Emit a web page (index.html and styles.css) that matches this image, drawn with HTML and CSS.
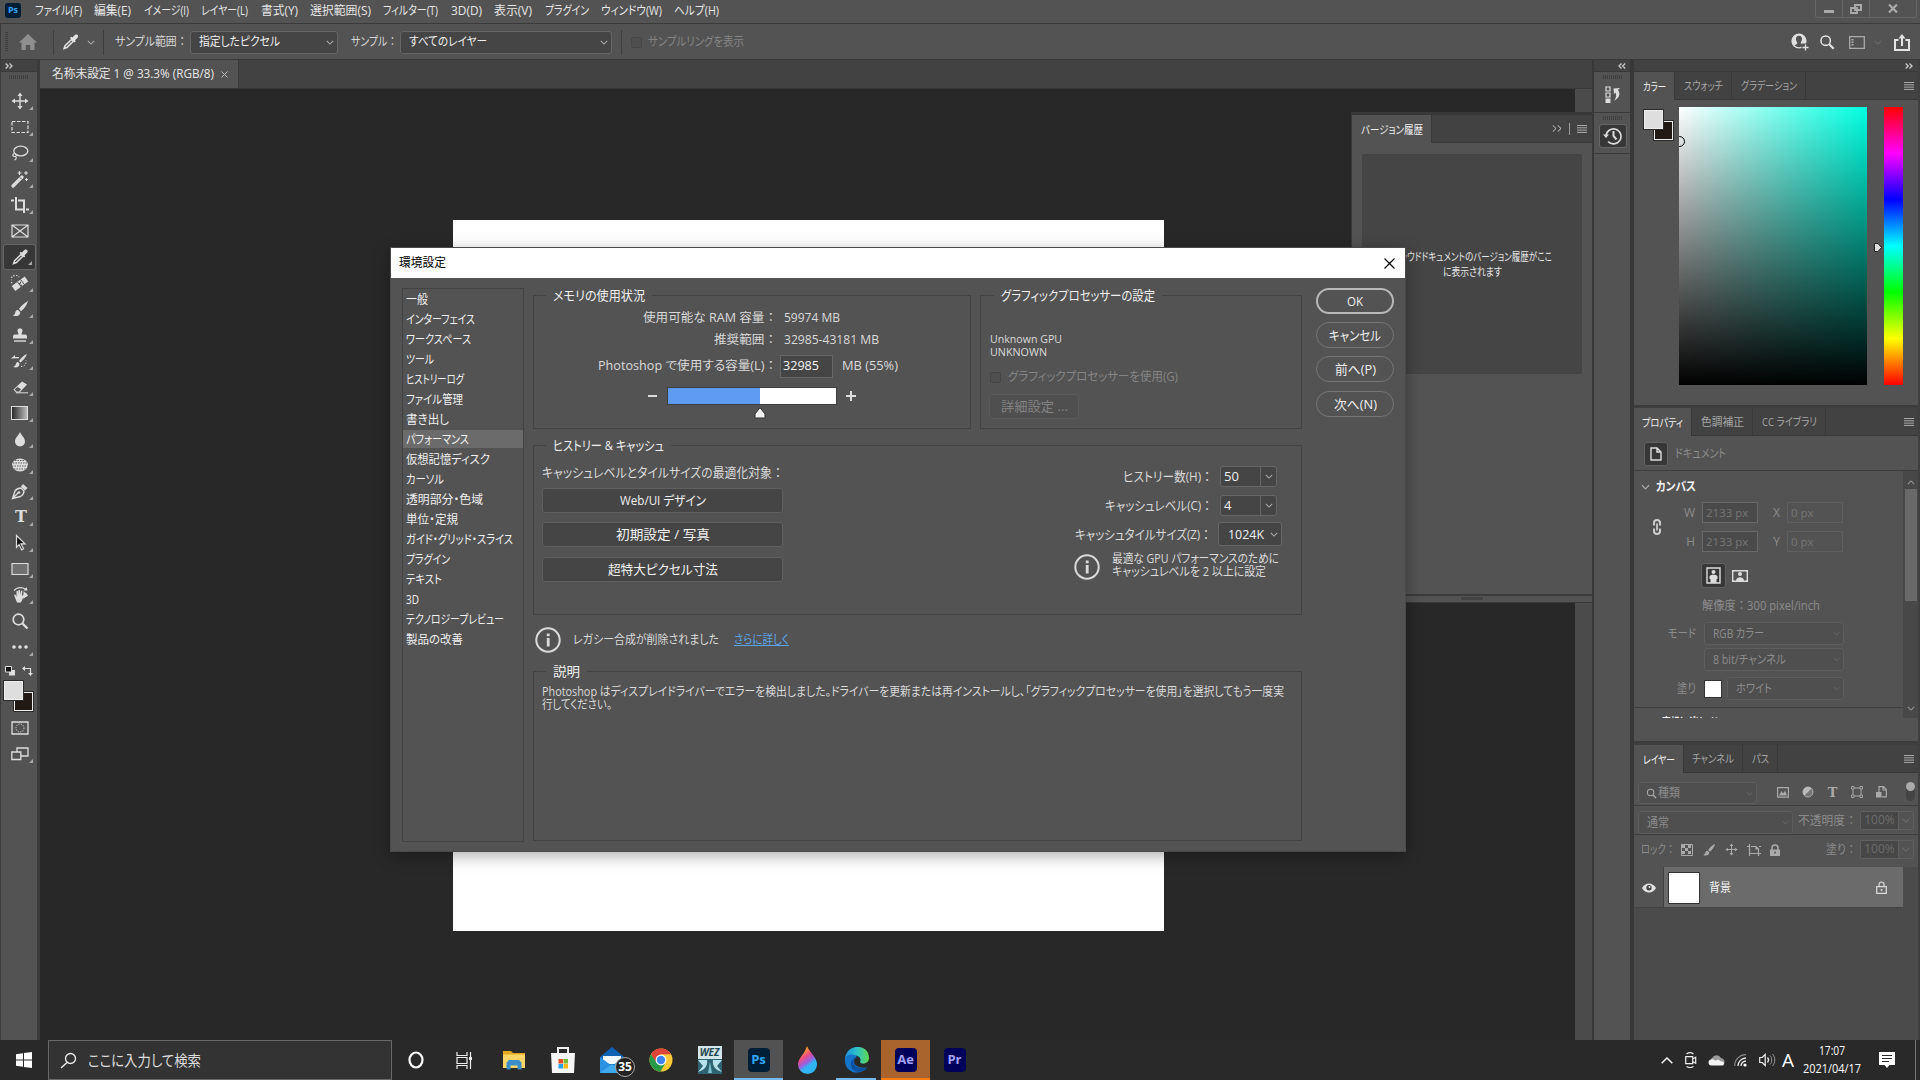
FILE: index.html
```html
<!DOCTYPE html>
<html lang="ja">
<head>
  <meta charset="UTF-8" />
  <meta name="viewport" content="width=device-width, initial-scale=1.0" />
  <title>環境設定</title>
  <link rel="stylesheet" href="styles.css">
</head>
<body>
  <!-- shared symbols -->
  <svg class="defs" width="0" height="0">
    <symbol id="i-chev" viewBox="0 0 10 6"><path d="M1 1l4 4 4-4" fill="none" stroke="currentColor" stroke-width="1.3"/></symbol>
    <symbol id="i-menu" viewBox="0 0 10 8"><path d="M0 .5h10M0 2.8h10M0 5.1h10M0 7.4h10" stroke="currentColor"/></symbol>
    <symbol id="i-right" viewBox="0 0 8 6"><path d="M.7.5L3.2 3 .7 5.5M4.5.5L7 3 4.5 5.5" fill="none" stroke="currentColor" stroke-width="1.3"/></symbol>
    <symbol id="i-left" viewBox="0 0 8 6"><path d="M3.5.5L1 3l2.5 2.5M7.2.5L4.7 3l2.5 2.5" fill="none" stroke="currentColor" stroke-width="1.3"/></symbol>
    <symbol id="i-dropper" viewBox="0 0 18 18"><path d="M10 6.5l1.8 1.8-6.4 6.2-2.8 1 1-2.8z" fill="none" stroke="currentColor" stroke-width="1.5"/><path d="M8.5 5l1.4-1.2 1 .8L13.4 2c2.2-1.5 4.2.6 2.7 2.7l-2.6 2.5.8 1L13 9.5z" fill="currentColor"/></symbol>
    <symbol id="i-brush" viewBox="0 0 18 18"><path d="M17 1c-4 2-7 5-9 8l2 2.2C13 9 16 5 17 1zM7 10c-2.5 0-2.5 2-3 3.5-.4 1-1.2 1.5-2.5 1.5C4 17 9.5 16.5 9.2 12z" fill="currentColor"/></symbol>
    <symbol id="i-move" viewBox="0 0 18 18"><path d="M9 2v14M2 9h14" stroke="currentColor" stroke-width="1.4"/><path d="M9 .5L6.500 4h5zM9 17.500L6.500 14h5zM.5 9L4 6.500v5zM17.500 9L14 6.500v5z" fill="currentColor"/></symbol>
    <symbol id="i-search" viewBox="0 0 18 18"><circle cx="7.5" cy="7.5" r="5.3" fill="none" stroke="currentColor" stroke-width="1.7"/><path d="M11.5 11.5l5 5" stroke="currentColor" stroke-width="2.4"/></symbol>
    <symbol id="i-info" viewBox="0 0 26 26"><circle cx="13" cy="13" r="11.7" fill="none" stroke="currentColor" stroke-width="2"/><path d="M11.8 6.5h2.8v2.8h-2.8zM11.8 11h2.8v8.5h-2.8z" fill="currentColor"/></symbol>
  </svg>

  <header class="menubar">
    <div class="ps-badge">Ps</div>
    <nav>
      <span data-w="47">ファイル(F)</span>
      <span data-w="37">編集(E)</span>
      <span data-w="45">イメージ(I)</span>
      <span data-w="47">レイヤー(L)</span>
      <span data-w="37">書式(Y)</span>
      <span data-w="61">選択範囲(S)</span>
      <span data-w="55">フィルター(T)</span>
      <span data-w="31">3D(D)</span>
      <span data-w="38">表示(V)</span>
      <span data-w="44">プラグイン</span>
      <span data-w="61">ウィンドウ(W)</span>
      <span data-w="45">ヘルプ(H)</span>
    </nav>
    <div class="winbtns">
      <div><svg width="10" height="3"><path d="M0 0h10v3H0z" fill="#aaa"/></svg></div>
      <div><svg width="12" height="10" viewBox="0 0 12 10"><path d="M5 1h6v5H5zM1 4h6v5H1z" fill="#535353" stroke="#aaa" stroke-width="1.8"/><path d="M5 5V1h6v5H8" fill="none" stroke="#aaa" stroke-width="1.8"/></svg></div>
      <div><svg width="10" height="9" viewBox="0 0 10 9"><path d="M1 .5l8 8M9 .5l-8 8" stroke="#aaa" stroke-width="2.2"/></svg></div>
    </div>
  </header>

  <div class="options">
    <i class="vgrip"></i>
    <svg class="home" width="18" height="16" viewBox="0 0 18 16"><path d="M9 0L0 8.500h2.500V16h4.300v-5h4.400v5h4.300V8.500H18z" fill="#8f8f8f"/></svg>
    <i class="sep"></i>
    <svg class="bright" width="19" height="18"><use href="#i-dropper"/></svg>
    <svg class="opt-chev" width="8" height="5"><use href="#i-chev"/></svg>
    <i class="sep"></i>
    <span class="lbl first" data-w="70">サンプル範囲 ：</span>
    <div class="select w148"><span data-w="81">指定したピクセル</span><svg width="8" height="5"><use href="#i-chev"/></svg></div>
    <span class="lbl" data-w="44">サンプル ：</span>
    <div class="select w212"><span data-w="78">すべてのレイヤー</span><svg width="8" height="5"><use href="#i-chev"/></svg></div>
    <i class="sep"></i>
    <i class="cbox"></i>
    <span class="dim" data-w="96">サンプルリングを表示</span>
    <div class="opt-right">
      <svg width="18" height="18" viewBox="0 0 18 18"><circle cx="8" cy="8" r="7.6" fill="#e0e0e0"/><path d="M8 2.8c-4 0-3.500 5-1.800 6.500.3 1.700-.7 2.200-2.700 3 1.500 1.400 3 1.900 4.500 1.900s3-.5 4.500-1.900c-2-.8-3-1.300-2.700-3C11.500 7.800 12 2.800 8 2.800z" fill="#535353"/><path d="M10.500 10.500h7.500v7.500h-7.500z" fill="#535353"/><path d="M14.500 11.500v6M11.500 14.500h6" stroke="#e0e0e0" stroke-width="1.3"/></svg>
      <svg class="bright g1" width="16" height="16"><use href="#i-search"/></svg>
      <svg class="g2" width="16" height="13" viewBox="0 0 16 13"><path d="M.7.7h14.600v11.600H.7z" fill="none" stroke="#aaa" stroke-width="1.3"/><path d="M2.500 3h2v1.500h-2zM2.500 5.500h2V7h-2zM2.500 8h2v1.500h-2z" fill="#aaa"/></svg>
      <svg class="g3" width="8" height="5"><use href="#i-chev"/></svg>
      <svg class="g4" width="16" height="17" viewBox="0 0 16 17"><path d="M4.500 6H1v10h14V6h-3.500" fill="none" stroke="#e4e4e4" stroke-width="2"/><path d="M8 12V3" stroke="#e4e4e4" stroke-width="2"/><path d="M4.500 4.500L8 0l3.500 4.500z" fill="#e4e4e4"/></svg>
    </div>
  </div>

  <main class="workspace">
    <aside class="tools">
      <div class="tools-head"><svg width="8" height="6"><use href="#i-right"/></svg></div>
      <i class="grip"></i>
      <div class="tool"><svg><use href="#i-move"/></svg></div>
      <div class="tool"><svg viewBox="0 0 18 18"><path d="M1 3.500h16v11H1z" fill="none" stroke="#ddd" stroke-width="1.2" stroke-dasharray="3.500 1.500"/></svg></div>
      <div class="tool"><svg viewBox="0 0 18 18"><ellipse cx="9.8" cy="7" rx="7" ry="4.8" fill="none" stroke="#ddd" stroke-width="1.3"/><path d="M3.500 9.500c-2.500.5-2 3 0 3s2.500-1.500 1-2.800M4.500 12.500c1.500 1 .5 3-1 3.500" fill="none" stroke="#ddd" stroke-width="1.2"/></svg></div>
      <div class="tool"><svg viewBox="0 0 18 18"><path d="M2 16L11 7" stroke="#ddd" stroke-width="3.2" stroke-linecap="round"/><path d="M9 7.500L10.500 9" stroke="#535353"/><path d="M8.500 1v4M6.500 3h4M15 1v4M13 3h4M15.500 8v3M14 9.500h3" stroke="#ddd" stroke-width="1.1"/></svg></div>
      <div class="tool"><svg viewBox="0 0 18 18"><path d="M0 4.500h3M5 1v12.500h8M7 4.500h6V17M15 13.500h3" fill="none" stroke="#ddd" stroke-width="2"/></svg></div>
      <div class="tool plain"><svg viewBox="0 0 18 18"><path d="M1 3h16v12H1zM1 3l16 12M17 3L1 15" fill="none" stroke="#ddd" stroke-width="1.2"/></svg></div>
      <div class="tool on"><svg><use href="#i-dropper"/></svg></div>
      <div class="tool"><svg viewBox="0 0 18 18"><path d="M2.500 14.500L15.500 5" stroke="#ddd" stroke-width="6"/><path d="M6.500 8l5 6.500M9.500 5.500l5 6.500" stroke="#535353" stroke-width="1"/><path d="M8 9.800h1.500M9.500 11.500H11M9 8.500h1" stroke="#535353" stroke-width="1.4"/><path d="M1 9a4 4 0 0 1 7-6" fill="none" stroke="#ddd" stroke-dasharray="1.2 1.5" stroke-width="1.3"/></svg></div>
      <div class="tool"><svg><use href="#i-brush"/></svg></div>
      <div class="tool"><svg viewBox="0 0 18 18"><path d="M6.500 4a2.700 2.700 0 0 1 5 0c.3 1.500-1 2.500-1 4.500H14c2 0 2 1 2 4H2c0-3 0-4 2-4h3.500c0-2-1.300-3-1-4.500z" fill="#ddd"/><path d="M3 15h12" stroke="#ddd" stroke-width="1.4"/></svg></div>
      <div class="tool"><svg viewBox="0 0 18 18"><path d="M16 2c-3 1-6 4-8 7l1.500 1.500C12 8.500 15 5 16 2zM7 10c-2 0-2 2-2.500 3S3 14.500 2 14.500c2.500 2 6.500 1 6.500-3z" fill="#ddd"/><path d="M0 6.500L4 3v2h4v1.300z" fill="#ddd"/><path d="M10 14.500c3 0 5.500-2 5-6" fill="none" stroke="#ddd" stroke-dasharray="1.2 1.6"/></svg></div>
      <div class="tool"><svg viewBox="0 0 18 18"><path d="M2.500 11.500L11 3.500l5 3-7.500 8H5z" fill="#ddd"/><path d="M3.800 11.500L6.500 9l3.500 2.300-2 2.200H5.500z" fill="#535353"/><path d="M5 14.800h12" stroke="#ddd"/></svg></div>
      <div class="tool"><i class="grad"></i></div>
      <div class="tool"><svg viewBox="0 0 18 18"><path d="M9 2c1 3 5 5.500 5 9.500a5 5 0 0 1-10 0C4 7.500 8 5 9 2z" fill="#ddd"/></svg></div>
      <div class="tool"><svg viewBox="0 0 18 18"><ellipse cx="9" cy="9" rx="8" ry="6.500" fill="#ddd"/><path d="M2 7h14M1 10h16M3 13h12M4 4.500h10" stroke="#535353" stroke-width=".9" stroke-dasharray="1.500 1"/></svg></div>
      <div class="tool"><svg viewBox="0 0 18 18"><path d="M1.500 16.500L4 9c2-2.500 4-3 6-3l3 3c0 2.500-1 4-3.500 5.500zM2 16l5.500-5.500" fill="none" stroke="#ddd" stroke-width="1.4"/><circle cx="8" cy="10.500" r="1.3" fill="#ddd"/><path d="M10 4.500L12 2l4.500 4L14 8.500z" fill="#ddd"/></svg></div>
      <div class="tool"><b class="type">T</b></div>
      <div class="tool"><svg viewBox="0 0 18 18"><path d="M5.500 1.500l8.500 8.300H10l2.500 5-1.800 1-2.600-5.200L5.500 13.500z" fill="#111" stroke="#ddd" stroke-width="1.2"/></svg></div>
      <div class="tool"><svg viewBox="0 0 18 18"><path d="M1 3.500h16v11H1z" fill="#707070" stroke="#ddd" stroke-width="1.2"/></svg></div>
      <div class="tool"><svg viewBox="0 0 18 18"><path d="M3 9l1.500-.5 1 2.500V5H7v4l.5-5H9v5l1-4.500 1.300.3L11 10l4-3.500L17 10l-5 2-2 4.500H6z" fill="#ddd"/><path d="M3 4.500C6 1 11 .8 14 3" fill="none" stroke="#ddd" stroke-width="1.2"/><path d="M12.500 4.500h4L15.500 1zM12.500 5v8l4-4z" fill="#ddd"/></svg></div>
      <div class="tool plain"><svg><use href="#i-search"/></svg></div>
      <div class="tool"><svg viewBox="0 0 18 18"><circle cx="3" cy="9" r="1.8" fill="#ddd"/><circle cx="9" cy="9" r="1.8" fill="#ddd"/><circle cx="15" cy="9" r="1.8" fill="#ddd"/></svg></div>
      <div class="swap">
        <svg width="11" height="10" viewBox="0 0 11 10"><path d="M4 4h6v5.500H4z" fill="#ddd"/><path d="M.5.5h6v5.500h-6z" fill="#111" stroke="#ddd"/></svg>
        <svg width="11" height="10" viewBox="0 0 11 10"><path d="M2 2.500h6.500V8" fill="none" stroke="#ddd" stroke-width="1.2"/><path d="M0 2.500L3 0v5zM8.500 10L6 7h5z" fill="#ddd"/></svg>
      </div>
      <div class="fgbg big"><i></i><i></i></div>
      <div class="tool plain"><svg viewBox="0 0 18 18"><path d="M1 3h16v12H1z" fill="none" stroke="#ddd" stroke-width="1.3"/><circle cx="9" cy="9" r="4" fill="none" stroke="#ddd" stroke-dasharray="1.2 1.2"/></svg></div>
      <div class="tool"><svg viewBox="0 0 18 18"><path d="M6 3h11v8H6z" fill="none" stroke="#ddd" stroke-width="1.3"/><path d="M.8 7h9v7.500h-9z" fill="#535353" stroke="#ddd" stroke-width="1.3"/></svg></div>
    </aside>

    <section class="doc">
      <div class="doc-tabs">
        <div class="doc-tab"><span data-w="162">名称未設定 1 @ 33.3% (RGB/8)</span><svg width="7" height="7" viewBox="0 0 7 7"><path d="M.5.5l6 6M6.500.5l-6 6" stroke="#bbb"/></svg></div>
      </div>
      <div class="stage">
        <div class="paper"></div>
        <div class="gutter"></div>
      </div>

      <div class="version">
        <div class="tabs">
          <div class="tab active"><span data-w="62">バージョン履歴</span></div>
          <div class="version-act"><svg width="10" height="7" viewBox="0 0 10 7"><path d="M.7.3L4 3.500.7 6.700M5.700.3L9 3.500 5.700 6.700" fill="none" stroke="#ccc"/></svg><i></i><svg width="10" height="8"><use href="#i-menu"/></svg></div>
        </div>
        <div class="version-box"><span data-w="160">クラウドドキュメントのバージョン履歴がここ</span><span data-w="59">に表示されます</span></div>
        <div class="version-foot"><i></i></div>
      </div>
    </section>

    <aside class="dock">
      <div class="head"><svg width="8" height="6"><use href="#i-left"/></svg></div>
      <div class="dock-item"><i class="grip"></i>
        <svg width="16" height="18" viewBox="0 0 16 18"><path d="M1 1h4v4H1zM1 7h4v4H1z" fill="none" stroke="#ddd" stroke-width="1.2"/><path d="M.5 12.500h5V17h-5z" fill="#ddd"/><path d="M8.500 2.500l6.500-.5-2 2c3 4 1 8-4 11 2.500-3.500 2.500-6 1.500-8.500L9 8z" fill="#ddd"/></svg>
      </div>
      <div class="dock-item"><i class="grip"></i>
        <div class="dock-on"><svg width="20" height="18" viewBox="0 0 20 18"><path d="M3 9a7.500 7.500 0 1 1 2 5.500" fill="none" stroke="#ddd" stroke-width="1.6"/><path d="M0 7.500h6L3 11z" fill="#ddd"/><path d="M10.500 4v5l3 3.500" fill="none" stroke="#ddd" stroke-width="2"/></svg></div>
      </div>
    </aside>

    <aside class="panels">
      <div class="head r"><svg width="8" height="6"><use href="#i-right"/></svg></div>

      <section class="color">
        <div class="tabs">
          <div class="tab active w40"><span data-w="23">カラー</span></div>
          <div class="tab w57"><span data-w="39">スウォッチ</span></div>
          <div class="tab w74"><span data-w="56">グラデーション</span></div>
          <svg class="pmenu" width="10" height="8"><use href="#i-menu"/></svg>
        </div>
        <div class="color-body">
          <div class="fgbg"><i></i><i></i></div>
          <div class="spectrum"><i></i></div>
          <svg class="hue-arrow" width="8" height="9" viewBox="0 0 8 9"><path d="M.5.5H4L7.500 4.500 4 8.500H.5z" fill="#ddd" stroke="#222"/></svg>
          <div class="hue"></div>
        </div>
      </section>

      <section class="props">
        <div class="tabs">
          <div class="tab active w57b"><span data-w="41">プロパティ</span></div>
          <div class="tab w61"><span data-w="43">色調補正</span></div>
          <div class="tab w73"><span data-w="55">CC ライブラリ</span></div>
          <svg class="pmenu" width="10" height="8"><use href="#i-menu"/></svg>
        </div>
        <div class="props-doc">
          <div class="sq"><svg width="12" height="14" viewBox="0 0 12 14"><path d="M1 1h6l4 4v8H1zM7 1v4h4" fill="none" stroke="#ddd" stroke-width="1.4"/></svg></div>
          <span data-w="51">ドキュメント</span>
        </div>
        <div class="props-wrap">
          <div class="props-body">
            <div class="props-title"><svg width="9" height="6"><use href="#i-chev"/></svg><b data-w="40">カンバス</b></div>
            <div class="xy">
              <svg width="10" height="16" viewBox="0 0 10 16"><path d="M2 6.500V4a3 3 0 0 1 6 0v2.500M2 9.500V12a3 3 0 0 0 6 0V9.500" fill="none" stroke="#ccc" stroke-width="2"/><path d="M5 4.500v7" stroke="#ccc" stroke-width="1.8"/></svg>
              <div class="xy-grid">
                <label>W</label><div class="num dark">2133 px</div><label>X</label><div class="num">0 px</div>
                <label>H</label><div class="num dark">2133 px</div><label>Y</label><div class="num">0 px</div>
              </div>
            </div>
            <div class="orient">
              <div class="sq"><svg width="15" height="17" viewBox="0 0 15 17"><path d="M1 1h13v15H1z" fill="none" stroke="#ddd" stroke-width="1.4"/><circle cx="7.5" cy="5" r="2" fill="#ddd"/><path d="M3.500 12V9.500c0-2.500 8-2.500 8 0V12H10.500v4h-6v-4z" fill="#ddd"/></svg></div>
              <svg width="16" height="12" viewBox="0 0 16 12"><path d="M.7.700h14.600v10.600H.7z" fill="none" stroke="#ddd" stroke-width="1.4"/><circle cx="8" cy="4" r="2" fill="#ddd"/><path d="M4 11c0-5 8-5 8 0z" fill="#ddd"/></svg>
            </div>
            <div class="reso"><span data-w="118">解像度 ： 300 pixel/inch</span></div>
            <div class="prow"><em><span data-w="28">モード</span></em><div class="select off"><span data-w="51">RGB カラー</span><svg width="7" height="5"><use href="#i-chev"/></svg></div></div>
            <div class="prow"><em></em><div class="select off"><span data-w="73">8 bit/チャンネル</span><svg width="7" height="5"><use href="#i-chev"/></svg></div></div>
            <div class="prow fill"><em><span data-w="19">塗り</span></em><i class="white"></i><div class="select off"><span data-w="36">ホワイト</span><svg width="7" height="5"><use href="#i-chev"/></svg></div></div>
            <div class="cut"><b data-w="56">定規とグリッド</b></div>
          </div>
          <div class="sbar"><svg class="up" width="8" height="5"><use href="#i-chev"/></svg><i></i><svg width="8" height="5"><use href="#i-chev"/></svg></div>
        </div>
      </section>

      <section class="layers">
        <div class="tabs">
          <div class="tab active w49"><span data-w="32">レイヤー</span></div>
          <div class="tab w59"><span data-w="42">チャンネル</span></div>
          <div class="tab w35"><span data-w="17">パス</span></div>
          <svg class="pmenu" width="10" height="8"><use href="#i-menu"/></svg>
        </div>
        <div class="lrow filter">
          <div class="select off"><svg class="mag" width="11" height="11"><use href="#i-search"/></svg><span data-w="22">種類</span><svg width="7" height="5"><use href="#i-chev"/></svg></div>
          <div class="ficons">
            <svg width="12" height="11" viewBox="0 0 12 11"><path d="M.6.6h10.800v9.600H.6z" fill="none" stroke="#aaa" stroke-width="1.2"/><path d="M2 8.500L4.500 4 6 6.500 8 3.500l2 5z" fill="#aaa"/></svg>
            <svg width="12" height="12" viewBox="0 0 12 12"><circle cx="6" cy="6" r="5" fill="#777" stroke="#aaa"/><path d="M2.400 9.500A5 5 0 0 1 9.500 2.400z" fill="#bbb"/></svg>
            <b class="type">T</b>
            <svg width="12" height="12" viewBox="0 0 12 12"><path d="M2 2h8v8H2z" fill="none" stroke="#aaa"/><path d="M.5.5h2.500V3H.5zM9 .5h2.500V3H9zM.5 9h2.500v2.500H.5zM9 9h2.500v2.500H9z" fill="#535353" stroke="#aaa" stroke-width=".9"/></svg>
            <svg width="11" height="12" viewBox="0 0 11 12"><path d="M3 6V.700h4.500l2.800 2.800v7.300H6M7 1v3h3" fill="none" stroke="#aaa" stroke-width="1.2"/><path d="M0 6h5.500v5.500H0z" fill="#aaa"/></svg>
          </div>
          <div class="toggle"><i></i></div>
        </div>
        <div class="lrow">
          <div class="select off w154"><span data-w="22">通常</span><svg width="7" height="5"><use href="#i-chev"/></svg></div>
          <span class="push" data-w="56">不透明度 ：</span>
          <div class="pct"><span>100%</span><svg width="8" height="5"><use href="#i-chev"/></svg></div>
        </div>
        <div class="lrow last">
          <span class="lock-l" data-w="32">ロック ：</span>
          <div class="licons">
            <svg width="12" height="12" viewBox="0 0 12 12"><path d="M.5.5h11v11H.5z" fill="none" stroke="#aaa"/><path d="M1 1h3v3H1zM7 1h3v3H7zM4 4h3v3H4zM1 7h3v3H1zM7 7h3v3H7z" fill="#aaa"/></svg>
            <svg width="14" height="14"><use href="#i-brush"/></svg>
            <svg width="13" height="13"><use href="#i-move"/></svg>
            <svg width="14" height="12" viewBox="0 0 14 12"><path d="M0 2.500h2M2.500 0v9.500H14M4 2.500h5l2.500 2.500v7M9 2.500V5h2.500M12 2.500h2M2.500 9.500V12" fill="none" stroke="#aaa" stroke-width="1.2"/></svg>
            <svg width="10" height="12" viewBox="0 0 10 12"><path d="M2 6V4a3 3 0 0 1 6 0v2" fill="none" stroke="#aaa" stroke-width="1.5"/><path d="M0 5.500h10V12H0z" fill="#aaa"/><path d="M4.300 7.500h1.500v2H4.300z" fill="#535353"/></svg>
          </div>
          <span class="push" data-w="28">塗り ：</span>
          <div class="pct"><span>100%</span><svg width="8" height="5"><use href="#i-chev"/></svg></div>
        </div>
        <div class="llist">
          <div class="layer">
            <div class="eye"><svg width="14" height="10" viewBox="0 0 14 10"><path d="M0 5c3.500-6 10.500-6 14 0-3.500 6-10.500 6-14 0z" fill="#e4e4e4"/><circle cx="7" cy="4.8" r="2.7" fill="#444"/><circle cx="7.5" cy="4" r="1" fill="#e4e4e4"/></svg></div>
            <div class="layer-main"><i class="thumb"></i><span data-w="22">背景</span>
              <svg width="11" height="13" viewBox="0 0 11 13"><path d="M3 5.500V3.500a2.500 2.500 0 0 1 5 0v2M.7 5.700h9.600v6.600H.7z" fill="none" stroke="#ddd" stroke-width="1.2"/><path d="M4.700 8h1.600v1.800H4.700z" fill="#ddd"/></svg></div>
          </div>
        </div>
      </section>
    </aside>
  </main>

  <footer class="taskbar">
    <div class="start"><svg width="16" height="16" viewBox="0 0 16 16"><path d="M0 2.200L7 1.200v6.300H0zM8 1l8-1v7.500H8zM0 8.500h7v6.300L0 13.800zM8 8.500h8V16l-8-1z" fill="#fff"/></svg></div>
    <div class="search">
      <svg width="17" height="17" viewBox="0 0 17 17"><circle cx="10.5" cy="6.5" r="5" fill="none" stroke="#eee" stroke-width="1.3"/><path d="M7 10.500L1 16" stroke="#eee" stroke-width="1.4"/></svg>
      <span data-w="113">ここに入力して検索</span>
    </div>
    <div class="app"><svg width="16" height="18" viewBox="0 0 16 18"><ellipse cx="8" cy="9" rx="6.5" ry="7.5" fill="none" stroke="#fff" stroke-width="2.2"/></svg></div>
    <div class="app"><svg width="17" height="17" viewBox="0 0 17 17"><path d="M1 0v3.500h10V0M1 17v-3.500h10V17M1 5.500h10v6H1zM14.500 0v17" fill="none" stroke="#eee" stroke-width="1.2"/><path d="M13 5h3v3h-3z" fill="#eee"/></svg></div>
    <div class="app"><svg width="22" height="20" viewBox="0 0 22 20"><path d="M0 1h8l2 2h12v15H0z" fill="#e5a71e"/><path d="M0 4.500h22V18H0z" fill="#fbd567"/><path d="M3.500 19.500V12.500L6 10h10l2.500 2.500v7h-4v-4h-7v4z" fill="#3a8fc9"/></svg></div>
    <div class="app"><svg width="24" height="28" viewBox="0 0 24 28"><path d="M7 8V2h10v6" fill="none" stroke="#eee" stroke-width="2"/><path d="M0 7h24l-1 20H1z" fill="#f5f5f5"/><path d="M7.500 13H12v4.500H7.500z" fill="#e44c26"/><path d="M12.500 13H17v4.500h-4.500z" fill="#7cba2d"/><path d="M7.500 18H12v4.500H7.500z" fill="#29a3e8"/><path d="M12.500 18H17v4.500h-4.500z" fill="#fbb813"/></svg></div>
    <div class="app mail"><svg width="26" height="26" viewBox="0 0 26 26"><path d="M1 10L13 0l12 10v16H1z" fill="#0f63b5"/><path d="M4 9h18v8H4z" fill="#f2f8fd"/><path d="M1 10l12 9 12-9v16H1z" fill="#2a93e0"/><path d="M1 26l12-9 12 9z" fill="#3fa9f0"/></svg><b>35</b></div>
    <div class="app"><svg width="24" height="24" viewBox="0 0 24 24"><circle cx="12" cy="12" r="11.5" fill="#fcc934"/><path d="M2 6.300A11.500 11.500 0 0 1 22 6.300H12L6.800 14.500z" fill="#e0433a"/><path d="M2 6.300a11.500 11.500 0 0 0 9.500 17.200l5-8.700H7.500z" fill="#259b4a"/><circle cx="12" cy="12" r="5.4" fill="#fff"/><circle cx="12" cy="12" r="4.2" fill="#3f82f0"/></svg></div>
    <div class="app"><div class="wez"><b>WEZ</b><svg width="24" height="15" viewBox="0 0 24 15"><path d="M0 0h24v15H0z" fill="#2f6472"/><path d="M0 1h9c1 5-2 10-9 12l5-6zM24 1h-9c-1 5 2 10 9 12l-5-6z" fill="#b7e3ec"/><path d="M10 14l2-11 2 11z" fill="#7fc0cf"/></svg></div></div>
    <div class="app open ps"><b class="adobe">Ps</b></div>
    <div class="app"><svg width="19" height="28" viewBox="0 0 19 28"><defs><linearGradient id="drop" x1="0" y1="0" x2=".5" y2="1"><stop offset="0" stop-color="#ffd22e"/><stop offset=".25" stop-color="#ff9a2e"/><stop offset=".45" stop-color="#ee4c84"/><stop offset=".65" stop-color="#9a5fe0"/><stop offset=".8" stop-color="#31b6f5"/></linearGradient></defs><path d="M9 0c2 6 10 11 10 18.500a9.500 9.500 0 0 1-19 0C0 12 7 8 9 0z" fill="url(#drop)"/></svg></div>
    <div class="app open edge"><svg width="24" height="26" viewBox="0 0 24 26"><defs><linearGradient id="edge" x1="0" y1="0" x2="1" y2="0"><stop offset="0" stop-color="#1b8fdc"/><stop offset=".5" stop-color="#2cc3c9"/><stop offset="1" stop-color="#62d84f"/></linearGradient></defs><path d="M0 12C1-4 24-4 24 11c0 6-8 7-9 4 2-4-2-7-6-6-5 1-9 4-9 8z" fill="url(#edge)"/><path d="M0 12c1-5 9-6 12-2-5 2-5 12 10 10.500C16 29-1 27 0 12z" fill="#1273c9"/><path d="M12 10c-6 2-5 14 10 10.500-4 6-16 6-16-3.500 0-4 3-7 6-7z" fill="#0c50a0"/></svg></div>
    <div class="app open ae"><b class="adobe">Ae</b></div>
    <div class="app pr"><b class="adobe">Pr</b></div>
    <div class="tray">
      <svg width="12" height="7" viewBox="0 0 12 7"><path d="M.7 6.300L6 1l5.300 5.300" fill="none" stroke="#fff" stroke-width="1.4"/></svg>
      <svg width="12" height="16" viewBox="0 0 12 16"><path d="M.7 4.700h7v7h-7zM7.700 7l3-1.700v6L7.700 9.500M1.500 2c2-1.500 5-1.500 7 0M1.500 14.500c2 1.200 5 1.200 7 0" fill="none" stroke="#eee" stroke-width="1.2"/></svg>
      <svg width="17" height="12" viewBox="0 0 17 12"><path d="M3 8a3 3 0 0 1 1-4 5 5 0 0 1 9 0 4 4 0 0 1 3 6z" fill="#999"/><path d="M3.500 11.500a3 3 0 0 1 0-6c2-.5 3 .5 4 1.200 2-1.500 4-1.200 4.500.5 4-.5 5 2.300 3 4.300z" fill="#f4f4f4"/></svg>
      <svg width="14" height="13" viewBox="0 0 14 13"><path d="M.7 12A11 11 0 0 1 12 .7" fill="none" stroke="#888" stroke-width="1.2"/><path d="M4 12a8 8 0 0 1 8-8M7 12a5 5 0 0 1 5-5" fill="none" stroke="#eee" stroke-width="1.3"/><circle cx="11" cy="11" r="1.6" fill="#fff"/></svg>
      <svg width="17" height="14" viewBox="0 0 17 14"><path d="M.7 4.500h2.500l3-3v11l-3-3H.7zM8.500 4.500c1.300 1.500 1.300 3.500 0 5" fill="none" stroke="#eee" stroke-width="1.2"/><path d="M11 2.500c2.300 2.500 2.300 6.500 0 9M13.500 1c3 3.500 3 8.500 0 12" fill="none" stroke="#999"/></svg>
      <span class="ime">A</span>
    </div>
    <div class="clock"><span data-w="26">17:07</span><span data-w="58">2021/04/17</span></div>
    <svg class="notif" width="16" height="16" viewBox="0 0 16 16"><path d="M0 0h16v13h-5.500L8 16l-2.500-3H0z" fill="#fff"/><path d="M3 3.500h10M3 6.500h10M3 9.500h7" stroke="#292929" stroke-width="1.1"/></svg>
    <i class="desk"></i>
  </footer>

  <div class="dialog">
    <div class="titlebar"><span data-w="47">環境設定</span><svg width="11" height="11" viewBox="0 0 11 11"><path d="M.5.5l10 10M10.500.5l-10 10" stroke="#000" stroke-width="1.2"/></svg></div>
    <div class="dialog-body">
      <ul class="cats">
        <li><span data-w="22">一般</span></li>
        <li><span data-w="69">インターフェイス</span></li>
        <li><span data-w="65">ワークスペース</span></li>
        <li><span data-w="28">ツール</span></li>
        <li><span data-w="58">ヒストリーログ</span></li>
        <li><span data-w="57">ファイル管理</span></li>
        <li><span data-w="43">書き出し</span></li>
        <li class="sel"><span data-w="63">パフォーマンス</span></li>
        <li><span data-w="84">仮想記憶ディスク</span></li>
        <li><span data-w="38">カーソル</span></li>
        <li><span data-w="77">透明部分・色域</span></li>
        <li><span data-w="52">単位・定規</span></li>
        <li><span data-w="107">ガイド・グリッド・スライス</span></li>
        <li><span data-w="44">プラグイン</span></li>
        <li><span data-w="36">テキスト</span></li>
        <li><span data-w="13">3D</span></li>
        <li><span data-w="98">テクノロジープレビュー</span></li>
        <li><span data-w="57">製品の改善</span></li>
      </ul>

      <div class="groups">
        <div class="top">
          <fieldset class="mem">
            <legend><span data-w="92">メモリの使用状況</span></legend>
            <div class="mrow"><em><span data-w="131">使用可能な RAM 容量 ：</span></em><span class="val" data-w="56">59974 MB</span></div>
            <div class="mrow"><em><span data-w="60">推奨範囲 ：</span></em><span class="val" data-w="95">32985-43181 MB</span></div>
            <div class="mrow in"><em><span data-w="176">Photoshop で使用する容量(L) ：</span></em><div class="input"><span data-w="36">32985</span></div><span data-w="56">MB (55%)</span></div>
            <div class="slider"><i class="minus"></i><div class="track"><i></i><svg width="12" height="12" viewBox="0 0 12 12"><path d="M6 .7L1 7v4h10V7z" fill="#f0f0f0" stroke="#333"/></svg></div><i class="plus"></i></div>
          </fieldset>
          <fieldset class="gpu">
            <legend><span data-w="154">グラフィックプロセッサーの設定</span></legend>
            <p><span data-w="72">Unknown GPU</span><br><span data-w="57">UNKNOWN</span></p>
            <div class="check"><i class="cbox"></i><span data-w="170">グラフィックプロセッサーを使用(G)</span></div>
            <div class="btn off"><span data-w="67">詳細設定 ...</span></div>
          </fieldset>
        </div>

        <fieldset class="hist">
          <legend><span data-w="111">ヒストリー &amp; キャッシュ</span></legend>
          <div class="presets">
            <span data-w="239">キャッシュレベルとタイルサイズの最適化対象 ：</span>
            <div class="btn"><span data-w="86">Web/UI デザイン</span></div>
            <div class="btn"><span data-w="94">初期設定 / 写真</span></div>
            <div class="btn"><span data-w="110">超特大ピクセル寸法</span></div>
          </div>
          <div class="cache">
            <div class="crow"><span data-w="87">ヒストリー数(H) ：</span><div class="combo"><span>50</span><svg width="8" height="5"><use href="#i-chev"/></svg></div></div>
            <div class="crow"><span data-w="105">キャッシュレベル(C) ：</span><div class="combo"><span>4</span><svg width="8" height="5"><use href="#i-chev"/></svg></div></div>
            <div class="crow"><span data-w="134">キャッシュタイルサイズ(Z) ：</span><div class="combo big"><span data-w="36">1024K</span><svg width="8" height="5"><use href="#i-chev"/></svg></div></div>
            <div class="tip"><svg width="26" height="26"><use href="#i-info"/></svg><p><span data-w="167">最適な GPU パフォーマンスのために</span><span data-w="154">キャッシュレベルを 2 以上に設定</span></p></div>
          </div>
        </fieldset>

        <div class="notice"><svg width="26" height="26"><use href="#i-info"/></svg><span data-w="146">レガシー合成が削除されました</span><a data-w="55">さらに詳しく</a></div>

        <fieldset class="desc">
          <legend><span data-w="27">説明</span></legend>
          <p><span data-w="742">Photoshop はディスプレイドライバーでエラーを検出しました。ドライバーを更新または再インストールし、「グラフィックプロセッサーを使用」を選択してもう一度実</span><span data-w="70">行してください。</span></p>
        </fieldset>
      </div>

      <div class="actions">
        <div class="pill ok"><span data-w="16">OK</span></div>
        <div class="pill"><span data-w="52">キャンセル</span></div>
        <div class="pill"><span data-w="41">前へ(P)</span></div>
        <div class="pill"><span data-w="43">次へ(N)</span></div>
      </div>
    </div>
  </div>

  <script src="fit.js"></script>
</body>
</html>
```

FILE: styles.css
```css
* {
  box-sizing: border-box;
}
body {
  margin: 0;
  width: 1920px;
  height: 1080px;
  overflow: hidden;
  display: flex;
  flex-direction: column;
  background: #535353;
  color: #e6e6e6;
  font-family: "Open Sans", "Noto Sans CJK JP", sans-serif;
  font-size: 12px;
  line-height: 1;
  position: relative;
}
svg {
  display: block;
  flex-shrink: 0;
}
.defs {
  position: absolute;
}
i, em {
  font-style: normal;
  display: block;
  flex-shrink: 0;
}
p, ul {
  margin: 0;
  padding: 0;
}
[data-w] {
  display: inline-block;
  white-space: nowrap;
  flex-shrink: 0;
  text-align: left;
  font-feature-settings: "palt";
}
[data-w] > .fit {
  display: inline-block;
  transform-origin: 0 50%;
}

/* menu bar */
.menubar {
  height: 24px;
  border-bottom: 1px solid #3a3a3a;
  display: flex;
  align-items: flex-start;
}
.ps-badge {
  margin: 3px 14px 0 5px;
  width: 16px;
  height: 15px;
  border-radius: 3px;
  background: #001e36;
  color: #31a8ff;
  font-size: 9px;
  font-weight: bold;
  line-height: 14px;
  text-align: center;
}
.menubar nav {
  display: flex;
  gap: 12.4px;
  height: 22px;
  align-items: center;
}
.winbtns {
  margin: 0 3px 0 auto;
  display: flex;
  height: 18px;
  border: 1px solid #666;
  border-top: 0;
  border-radius: 0 0 3px 3px;
}
.winbtns div {
  width: 27px;
  display: flex;
  align-items: center;
  justify-content: center;
  border-right: 1px solid #666;
}
.winbtns div:first-child {
  padding-top: 6px;
}
.winbtns div:last-child {
  width: 46px;
  border-right: 0;
}

/* options bar */
.options {
  height: 36px;
  border-bottom: 1px solid #3a3a3a;
  display: flex;
  align-items: center;
  border-left: 1px solid #3a3a3a;
  padding-top: 1px;
}
.vgrip {
  width: 3px;
  height: 20px;
  margin: 0 11px 0 4px;
  background: repeating-linear-gradient(#3d3d3d 0 1px, transparent 1px 2px);
}
.home {
  margin-right: 16px;
}
.sep {
  width: 1px;
  height: 25px;
  background: #3d3d3d;
}
.bright {
  color: #e4e4e4;
}
.options .sep + .bright {
  margin-left: 7px;
}
.opt-chev {
  color: #aaa;
  margin: 0 8px 0 7px;
}
.lbl {
  color: #d6d6d6;
  margin-right: 5px;
}
.lbl.first {
  margin-left: 11px;
}
.select {
  height: 23px;
  border: 1px solid #666;
  border-radius: 3px;
  background: #454545;
  display: flex;
  align-items: center;
  justify-content: space-between;
  padding: 0 3px 0 8px;
  color: #f0f0f0;
}
.select svg {
  color: #aaa;
}
.w148 {
  width: 148px;
  margin-right: 13px;
}
.w212 {
  width: 212px;
  margin-right: 9px;
}
.cbox {
  width: 11px;
  height: 11px;
  border: 1px solid #464646;
  border-radius: 2px;
  background: #4f4f4f;
}
.options .cbox {
  margin: 0 6px 0 9px;
}
.dim {
  color: #858585;
}
.opt-right {
  margin: 0 10px 0 auto;
  display: flex;
  align-items: center;
}
.g1 { margin-left: 10px; }
.g2 { margin-left: 14px; }
.g3 { margin: 0 12px 0 9px; color: #6a6a6a; }

/* workspace */
.workspace {
  height: 980px;
  display: flex;
}
.tools {
  width: 40px;
  border-right: 3px solid #3b3b3b;
  border-left: 1px solid #3b3b3b;
  display: flex;
  flex-direction: column;
}
.tools-head, .head {
  height: 12px;
  background: #424242;
  border-bottom: 1px solid #3a3a3a;
  padding: 3px 0 0 4px;
  color: #ccc;
}
.grip {
  width: 20px;
  height: 4px;
  margin: 3px auto 9px;
  background: repeating-linear-gradient(90deg, #3f3f3f 0 1px, transparent 1px 2px);
}
.tool {
  height: 26px;
  width: 33px;
  margin-left: 2px;
  padding-left: 8px;
  display: flex;
  align-items: center;
  color: #ddd;
  position: relative;
}
.tool svg {
  width: 18px;
  height: 18px;
}
.tool::after {
  content: "";
  position: absolute;
  right: 3px;
  bottom: 4px;
  border: 2px solid;
  border-color: transparent #aaa #aaa transparent;
}
.tool.plain::after {
  display: none;
}
.tool.on {
  background: #373737;
  border: 1px solid #666;
  border-radius: 3px;
  padding-left: 7px;
}
.grad {
  width: 17px;
  height: 14px;
  border: 1px solid #ddd;
  background: linear-gradient(90deg, #2a2a2a, #bbb);
}
.type {
  font-family: "DejaVu Serif", serif;
  font-size: 16px;
  width: 18px;
  text-align: center;
}
.tool .type {
  margin-left: 1px;
}
.swap {
  display: flex;
  gap: 6px;
  padding: 6px 0 0 4px;
  height: 21px;
}
.fgbg {
  position: relative;
  width: 30px;
  height: 30px;
}
.fgbg i {
  position: absolute;
  width: 19px;
  height: 19px;
  left: 11px;
  top: 11px;
  background: #211914;
  border: 1px solid #eee;
  outline: 1px solid #2a2a2a;
}
.fgbg i:first-child {
  left: 1px;
  top: 0;
  z-index: 1;
  background: #dedede;
}
.fgbg.big {
  margin: 0 0 4px 2px;
}

.doc {
  width: 1552px;
  position: relative;
}
.doc-tabs {
  height: 29px;
  background: #424242;
  border-bottom: 1px solid #383838;
}
.doc-tab {
  width: 199px;
  height: 28px;
  background: #535353;
  display: flex;
  align-items: center;
  gap: 7px;
  padding: 0 0 0 12px;
  border-right: 1px solid #383838;
}
.stage {
  height: 951px;
  background: #282828;
  display: flex;
  justify-content: space-between;
}
.paper {
  width: 711px;
  height: 711px;
  margin: 131px 0 0 413px;
  background: #fff;
}
.gutter {
  width: 17px;
  background: #4b4b4b;
}

/* floating version history panel */
.version {
  position: absolute;
  left: 1311px;
  top: 52px;
  width: 241px;
  height: 491px;
  background: #535353;
  border: 1px solid #383838;
  border-top-width: 3px;
  border-right: 0;
}
.tabs {
  height: 28px;
  background: #424242;
  border-bottom: 1px solid #383838;
  display: flex;
}
.tab {
  display: flex;
  align-items: center;
  justify-content: center;
  border-right: 1px solid #383838;
  color: #a6a6a6;
  font-size: 11px;
}
.tab.active {
  background: #535353;
  color: #f0f0f0;
  height: 28px;
}
.version .tab {
  width: 80px;
}
.version-act {
  margin: 0 5px 0 auto;
  display: flex;
  align-items: center;
  gap: 7px;
  color: #aaa;
}
.version-act i {
  width: 1px;
  height: 12px;
  background: #999;
}
.version-box {
  margin: 11px 0 0 10px;
  width: 220px;
  height: 220px;
  background: #454545;
  display: flex;
  flex-direction: column;
  align-items: center;
  justify-content: center;
  gap: 4px;
  font-size: 11px;
}
.version-foot {
  position: absolute;
  left: 0;
  right: 0;
  bottom: 0;
  height: 8px;
  border-top: 2px solid #3b3b3b;
}
.version-foot i {
  width: 22px;
  height: 3px;
  margin: 1px auto;
  background: #444;
}

.dock {
  width: 40px;
  border-left: 2px solid #383838;
  border-right: 2px solid #383838;
}
.dock .head {
  padding-left: 24px;
}
.dock-item {
  height: 41px;
  border-bottom: 1px solid #3a3a3a;
  display: flex;
  flex-direction: column;
  align-items: center;
  padding-left: 1px;
}
.dock-item .grip {
  margin-bottom: 7px;
}
.dock-on {
  width: 28px;
  height: 24px;
  margin-top: -3px;
  background: #373737;
  border: 1px solid #666;
  border-radius: 3px;
  display: flex;
  align-items: center;
  justify-content: center;
}

.panels {
  width: 288px;
  border-left: 2px solid #383838;
  border-right: 2px solid #3f3f3f;
}
.head.r {
  padding-left: 271px;
}
.pmenu {
  margin: 10px 4px 0 auto;
  color: #aaa;
}
.w40 { width: 41px; }
.w57 { width: 57px; }
.w74 { width: 74px; }
.w57b { width: 58px; }
.w61 { width: 61px; }
.w73 { width: 73px; }
.w49 { width: 50px; }
.w59 { width: 59px; }
.w35 { width: 35px; }
.color {
  height: 336px;
  border-bottom: 3px solid #3e3e3e;
}
.color-body {
  display: flex;
  padding: 7px 0 0 8px;
}
.color-body .fgbg {
  margin: 3px 6px 0 1px;
}
.spectrum {
  width: 188px;
  height: 278px;
  background: linear-gradient(transparent, #000), linear-gradient(90deg, #fff, #00ffe1);
  position: relative;
  overflow: hidden;
}
.spectrum i {
  position: absolute;
  left: -5px;
  top: 29px;
  width: 11px;
  height: 11px;
  border: 1px solid #000;
  border-radius: 50%;
}
.hue-arrow {
  margin: 136px 2px 0 7px;
}
.hue {
  width: 19px;
  height: 278px;
  background: linear-gradient(#f00, #f0f, #00f, #0ff, #0f0, #ff0, #f00);
}

.props {
  height: 337px;
  border-bottom: 4px solid #3e3e3e;
  color: #8c8c8c;
}
.props-doc {
  height: 35px;
  border-bottom: 1px solid #3d3d3d;
  display: flex;
  align-items: center;
  gap: 7px;
  padding: 1px 0 0 10px;
}
.sq {
  width: 24px;
  height: 24px;
  background: #373737;
  border: 1px solid #626262;
  border-radius: 3px;
  display: flex;
  align-items: center;
  justify-content: center;
}
.props-wrap {
  display: flex;
  height: 247px;
}
.props-body {
  width: 269px;
  overflow: hidden;
}
.props-title {
  display: flex;
  align-items: center;
  gap: 6px;
  padding-left: 7px;
  height: 31px;
  color: #f2f2f2;
}
.props-title svg {
  color: #aaa;
}
.xy {
  display: flex;
  align-items: center;
  gap: 14px;
  padding-left: 18px;
  height: 50px;
}
.xy-grid {
  display: grid;
  grid-template-columns: 19px 56px 15px 56px;
  column-gap: 7px;
  row-gap: 8px;
  align-items: center;
  text-align: right;
}
.num {
  height: 21px;
  border: 1px solid #5f5f5f;
  line-height: 20px;
  padding-left: 3px;
  text-align: left;
  font-size: 11.5px;
  color: #767676;
}
.num.dark {
  border-color: #696969;
  background: #4a4a4a;
}
.orient {
  display: flex;
  align-items: center;
  gap: 6px;
  padding: 11px 0 8px 67px;
}
.orient .sq {
  width: 25px;
  height: 25px;
}
.reso {
  padding: 4px 0 10px 68px;
}
.prow {
  display: flex;
  align-items: center;
  height: 23px;
  margin-bottom: 3px;
}
.prow em {
  width: 62px;
  text-align: right;
  margin-right: 8px;
}
.prow.fill {
  margin-top: 6px;
}
.select.off {
  background: #4f4f4f;
  border-color: #5d5d5d;
  color: #8c8c8c;
}
.select.off svg {
  color: #6b6b6b;
}
.prow .select {
  width: 140px;
}
.white {
  width: 18px;
  height: 18px;
  background: #fff;
  border: 1px solid #333;
  margin-right: 5px;
}
.white + .select {
  width: 117px;
}
.cut {
  border-top: 1px solid #3d3d3d;
  margin-top: 7px;
  padding: 9px 0 0 28px;
  color: #f2f2f2;
}
.sbar {
  width: 15px;
  background: #484848;
  display: flex;
  flex-direction: column;
  align-items: center;
  justify-content: space-between;
  padding: 9px 0 7px;
  color: #999;
}
.sbar i {
  width: 12px;
  height: 112px;
  background: #696969;
  margin: 4px 0 auto;
}
.up {
  transform: rotate(180deg);
}

.layers {
  color: #8c8c8c;
}
.lrow {
  height: 29px;
  display: flex;
  align-items: flex-start;
  padding: 5px 4px 0;
  border-bottom: 1px solid #3d3d3d;
}
.lrow.filter {
  height: 33px;
  padding-top: 9px;
}
.lrow.last {
  height: 32px;
  border: 0;
}
.filter .select {
  width: 119px;
  height: 22px;
  padding-left: 7px;
}
.filter .select .mag {
  color: #aaa;
}
.filter .select span {
  margin: 0 auto 0 1px;
}
.filter .select .fit {
  margin: 0;
}
.ficons {
  display: flex;
  align-items: center;
  gap: 13px;
  height: 20px;
  margin-left: 20px;
  color: #aaa;
}
.ficons .type {
  font-size: 13px;
  width: 11px;
}
.toggle {
  width: 9px;
  height: 19px;
  border-radius: 5px;
  background: #444;
  margin: 0 -1px 0 auto;
}
.toggle i {
  width: 9px;
  height: 9px;
  border-radius: 50%;
  background: #aaa;
}
.w154 {
  width: 155px;
}
.lrow .push {
  margin: 4px 6px 0 auto;
}
.pct {
  width: 54px;
  height: 19px;
  border: 1px solid #5f5f5f;
  border-radius: 2px;
  display: flex;
  align-items: center;
  justify-content: space-between;
  padding-right: 3px;
  color: #6c6c6c;
}
.pct span {
  width: 38px;
  height: 17px;
  line-height: 16px;
  text-align: center;
  background: #474747;
  border-right: 1px solid #5f5f5f;
}
.lock-l {
  margin: 4px 0 0 3px;
}
.licons {
  display: flex;
  align-items: center;
  gap: 9px;
  height: 19px;
  margin-left: 8px;
  color: #aaa;
}
.llist {
  height: 174px;
  background: #4b4b4b;
}
.layer {
  width: 269px;
  height: 41px;
  display: flex;
  background: #535353;
  border-bottom: 1px solid #424242;
}
.eye {
  width: 30px;
  padding-top: 2px;
  border-right: 1px solid #424242;
  display: flex;
  align-items: center;
  justify-content: center;
}
.layer-main {
  flex: 1;
  background: #6b6b6b;
  display: flex;
  align-items: center;
  color: #f5f5f5;
  padding: 1px 16px 0 4px;
}
.layer-main svg {
  margin-left: auto;
}
.thumb {
  width: 32px;
  height: 32px;
  background: #fff;
  border: 1px solid #333;
  margin-right: 9px;
}

/* windows taskbar */
.taskbar {
  height: 40px;
  background: #292929;
  display: flex;
  color: #fff;
}
.start {
  width: 48px;
  display: flex;
  align-items: center;
  justify-content: center;
}
.search {
  width: 344px;
  background: #333;
  border: 1px solid #686868;
  display: flex;
  align-items: center;
  gap: 11px;
  padding-left: 11px;
  font-size: 15px;
  color: #ddd;
}
.search + .app {
  margin-left: -1px;
}
.app {
  width: 49px;
  display: flex;
  align-items: center;
  justify-content: center;
  position: relative;
}
.open::after {
  content: "";
  position: absolute;
  left: 0;
  right: 0;
  bottom: 0;
  height: 2px;
  background: #76b9ed;
}
.open.edge::after {
  left: 4px;
  right: 5px;
}
.ps {
  background: #525252;
}
.ae {
  background: #a9632c;
}
.open.ae::after {
  background: #ff7b10;
}
.adobe {
  width: 22px;
  height: 24px;
  border-radius: 4px;
  background: #001e36;
  color: #31a8ff;
  font-size: 13px;
  line-height: 22px;
  text-align: center;
}
.ae .adobe, .pr .adobe {
  background: #00005b;
  color: #a3a3ff;
}
.mail b {
  position: absolute;
  left: 28px;
  top: 17px;
  width: 20px;
  height: 20px;
  border-radius: 50%;
  border: 1px solid #aaa;
  background: #222;
  font-size: 12px;
  line-height: 17px;
  text-align: center;
}
.wez {
  width: 24px;
  height: 28px;
  text-align: center;
}
.wez b {
  display: block;
  height: 13px;
  font-size: 10px;
  line-height: 13px;
  font-style: italic;
  background: #d5e6ea;
  color: #1f4652;
}
.tray {
  margin-left: auto;
  display: flex;
  align-items: center;
  gap: 11px;
}
.tray svg:nth-child(2) {
  margin-left: 1px;
}
.tray svg:nth-child(4) {
  margin-left: -2px;
}
.ime {
  font-size: 19px;
  margin-left: -5px;
}
.clock {
  width: 60px;
  margin-left: 8px;
  display: flex;
  flex-direction: column;
  align-items: center;
  justify-content: center;
  gap: 6px;
}
.notif {
  margin: 12px 20px 0 17px;
}
.desk {
  width: 1px;
  background: #777;
  margin-right: 4px;
}

/* preferences dialog */
.dialog {
  position: absolute;
  left: 391px;
  top: 248px;
  width: 1014px;
  height: 603px;
  background: #535353;
  box-shadow: 0 0 0 1px #4a4a4a, 0 4px 16px rgba(0, 0, 0, 0.35);
  color: #dadada;
}
.titlebar {
  height: 30px;
  background: #fff;
  color: #000;
  display: flex;
  align-items: center;
  justify-content: space-between;
  padding: 0 10px 0 8px;
}
.dialog-body {
  display: flex;
  height: 573px;
}
.cats {
  list-style: none;
  width: 122px;
  height: 554px;
  margin: 10px 9px 0 11px;
  border: 1px solid #434343;
  color: #f0f0f0;
}
.cats li {
  height: 18px;
  margin: 1px 0 2px;
  padding: 4px 0 0 3px;
}
.cats li + li {
  margin-top: 2px;
}
.cats .sel {
  background: #6b6b6b;
}
.groups {
  width: 769px;
  padding-top: 7px;
}
.top {
  display: flex;
  gap: 9px;
}
fieldset {
  margin: 0;
  padding: 0;
  border: 1px solid #434343;
  min-width: 0;
}
legend {
  margin-left: 12px;
  padding: 0 7px;
  height: 20px;
  line-height: 20px;
  font-size: 13px;
  color: #f0f0f0;
}
.mem {
  width: 438px;
  height: 144px;
}
.mrow {
  height: 22px;
  display: flex;
  align-items: center;
}
.mrow em {
  width: 240px;
  margin-right: 10px;
  text-align: right;
}
.mem legend + .mrow {
  margin-top: 2px;
}
.mrow.in {
  height: 24px;
  margin-top: 3px;
}
.mrow.in em {
  margin-right: 6px;
}
.input {
  width: 53px;
  height: 23px;
  margin-right: 9px;
  border: 1px solid #666;
  background: #454545;
  color: #f5f5f5;
  padding: 4px 0 0 2px;
}
.slider {
  display: flex;
  align-items: center;
  margin: 9px 0 0 114px;
}
.minus, .plus {
  width: 9px;
  height: 2px;
  background: #ddd;
  position: relative;
}
.plus::after {
  content: "";
  position: absolute;
  left: 4px;
  top: -4px;
  width: 2px;
  height: 10px;
  background: #ddd;
}
.plus {
  width: 10px;
}
.track {
  position: relative;
  width: 170px;
  height: 18px;
  margin: 0 9px 0 10px;
  background: #fff;
  border: 1px solid #3f3f3f;
}
.track i {
  width: 92px;
  height: 16px;
  background: #5f9af3;
}
.track svg {
  position: absolute;
  left: 86px;
  top: 19px;
}
.gpu {
  width: 322px;
  height: 144px;
}
.gpu legend {
  margin-left: 13px;
}
.gpu p {
  margin: 27px 0 13px 9px;
  line-height: 13px;
  font-size: 11.5px;
}
.gpu .check {
  display: flex;
  align-items: center;
  gap: 7px;
  margin: 0 0 11px 9px;
  color: #858585;
}
.btn {
  width: 242px;
  height: 25px;
  background: #454545;
  border: 1px solid #606060;
  border-radius: 3px;
  color: #f2f2f2;
  display: flex;
  align-items: center;
  justify-content: center;
  font-size: 13px;
}
.btn.off {
  width: 90px;
  margin-left: 8px;
  background: #4f4f4f;
  border-color: #5a5a5a;
  color: #828282;
}
.hist {
  height: 180px;
  margin-top: 6px;
}
.presets {
  float: left;
  padding: 11px 0 0 8px;
}
.presets > [data-w] {
  margin-bottom: 9px;
  font-size: 13px;
}
.presets .btn {
  width: 241px;
  margin-bottom: 9px;
}
.presets .btn:nth-child(3) {
  margin-bottom: 10px;
}
.cache {
  float: right;
  width: 235px;
  padding-top: 10px;
}
.crow {
  height: 22px;
  margin-bottom: 7px;
  display: flex;
  align-items: center;
  font-size: 13px;
}
.crow > [data-w] {
  margin-left: auto;
}
.combo {
  width: 57px;
  height: 21px;
  margin: 0 24px 0 10px;
  background: #454545;
  border: 1px solid #666;
  border-radius: 3px;
  display: flex;
  align-items: center;
  justify-content: space-between;
  padding: 0 3px;
  color: #f0f0f0;
}
.combo svg {
  color: #aaa;
}
.combo > span {
  border-right: 1px solid #666;
  width: 37px;
  height: 19px;
  line-height: 18px;
}
.combo.big {
  width: 64px;
  height: 24px;
  margin: 0 19px 0 9px;
  padding-left: 9px;
}
.combo.big > span {
  border: 0;
}
.tip {
  display: flex;
  align-items: center;
  gap: 12px;
  padding-left: 8px;
  margin-top: 9px;
}
.tip p, .desc p {
  display: flex;
  flex-direction: column;
  gap: 1px;
}
.tip p {
  margin-top: -3px;
}
.notice {
  height: 46px;
  display: flex;
  align-items: center;
  padding: 3px 0 0 2px;
}
.notice svg {
  margin-right: 12px;
}
.notice a {
  margin-left: 15px;
  color: #5ba4e8;
}
.notice a .fit {
  text-decoration: underline;
}
.desc {
  height: 180px;
}
.desc p {
  padding: 5px 0 0 8px;
}
.actions {
  margin: 10px 0 0 14px;
}
.pill {
  width: 78px;
  height: 26px;
  margin-bottom: 8px;
  border: 1.5px solid #757575;
  border-radius: 13px;
  display: flex;
  align-items: center;
  justify-content: center;
  font-size: 13px;
  color: #f0f0f0;
}
.pill:nth-child(3) {
  margin-bottom: 9px;
}
.pill.ok {
  border: 2px solid #b8b8b8;
}
```

FILE: fit.js
```js
// squeeze every label to the width given in data-w
document.querySelectorAll("[data-w]").forEach(el => {
  const w = Number(el.dataset.w);
  const inner = document.createElement("span");
  inner.className = "fit";
  inner.textContent = el.textContent;
  el.textContent = "";
  el.appendChild(inner);
  const natural = inner.getBoundingClientRect().width;
  inner.style.width = natural + "px";
  inner.style.transform = `scaleX(${w / natural})`;
  el.style.width = w + "px";
});
```
